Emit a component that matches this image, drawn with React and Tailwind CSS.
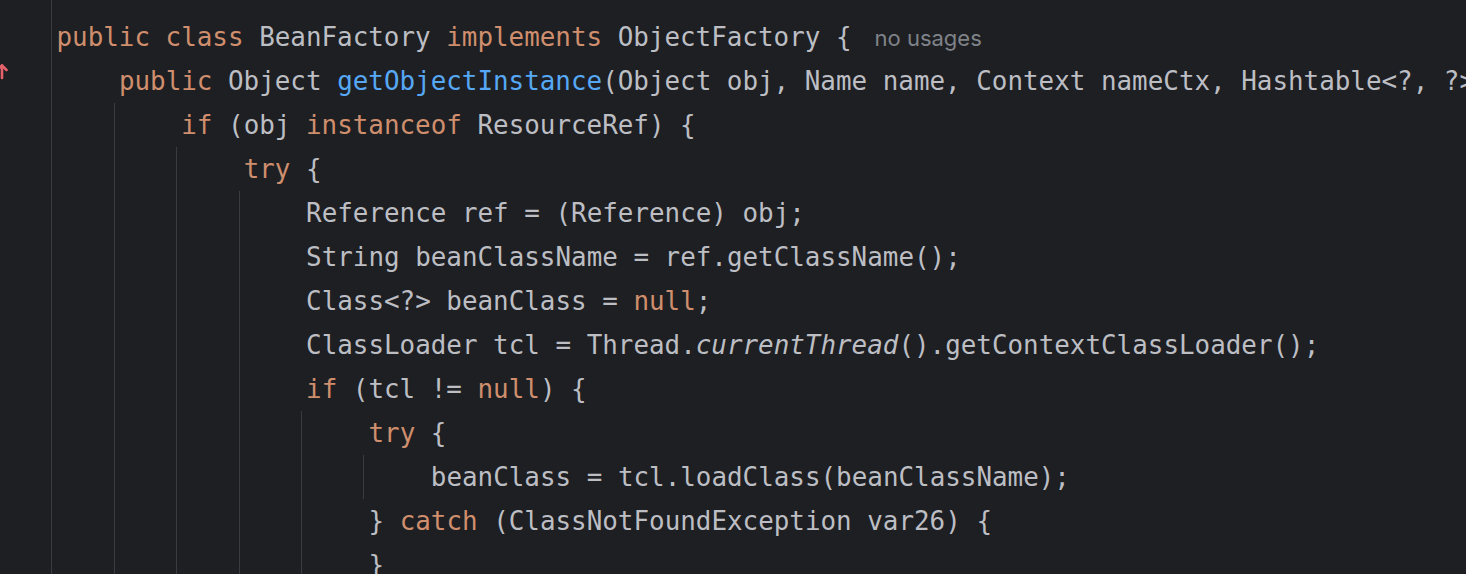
import React from "react";

const K = "text-[#cf8e6d]";
const F = "text-[#56a8f5]";
const I = "italic";

function Line({ children }) {
  return <div className="h-[44px] leading-[44px] whitespace-pre">{children}</div>;
}

function Block({ children }) {
  return (
    <div className="-ml-[5px] border-l border-[#393b40] pl-[66.4px]">{children}</div>
  );
}

export default function App() {
  return (
    <div className="flex h-[574px] w-full overflow-hidden bg-[#1e1f22] font-['DejaVu_Sans_Mono',monospace] text-[25.9px] text-[#bcbec4]">
      <div className="w-[51px] shrink-0 pt-[15px]">
        <div className="h-[44px]" />
        <div className="h-[44px]">
          <svg
            className="-ml-[5px] mt-[4px] block"
            width="14"
            height="18"
            viewBox="0 0 14 18"
            fill="none"
            stroke="#e5626d"
            strokeWidth="2.6"
            strokeLinecap="round"
            strokeLinejoin="round"
          >
            <path d="M7 2.5 L7 15" />
            <path d="M2.5 7 L7 2.5 L11.5 7" />
          </svg>
        </div>
      </div>
      <div className="min-w-0 flex-1 border-l border-[#393b40] pl-[4.5px] pt-[15px]">
        <Line>
          <span className={K}>public class </span>BeanFactory <span className={K}>implements </span>ObjectFactory {"{"}
          <span className="ml-[23px] font-['Inter',sans-serif] text-[22px] text-[#7f8389]">no usages</span>
        </Line>
        <div className="pl-[62.4px]">
          <Line>
            <span className={K}>public </span>Object <span className={F}>getObjectInstance</span>(Object obj, Name name, Context nameCtx, Hashtable&lt;?, ?&gt; environment) <span className={K}>throws </span>Exception {"{"}
          </Line>
          <Block>
            <Line>
              <span className={K}>if </span>(obj <span className={K}>instanceof </span>ResourceRef) {"{"}
            </Line>
            <Block>
              <Line>
                <span className={K}>try </span>{"{"}
              </Line>
              <Block>
                <Line>Reference ref = (Reference) obj;</Line>
                <Line>String beanClassName = ref.getClassName();</Line>
                <Line>
                  Class&lt;?&gt; beanClass = <span className={K}>null</span>;
                </Line>
                <Line>
                  ClassLoader tcl = Thread.<span className={I}>currentThread</span>().getContextClassLoader();
                </Line>
                <Line>
                  <span className={K}>if </span>(tcl != <span className={K}>null</span>) {"{"}
                </Line>
                <Block>
                  <Line>
                    <span className={K}>try </span>{"{"}
                  </Line>
                  <Block>
                    <Line>beanClass = tcl.loadClass(beanClassName);</Line>
                  </Block>
                  <Line>
                    {"} "}<span className={K}>catch </span>(ClassNotFoundException var26) {"{"}
                  </Line>
                  <Line>{"}"}</Line>
                </Block>
              </Block>
            </Block>
          </Block>
        </div>
      </div>
    </div>
  );
}
